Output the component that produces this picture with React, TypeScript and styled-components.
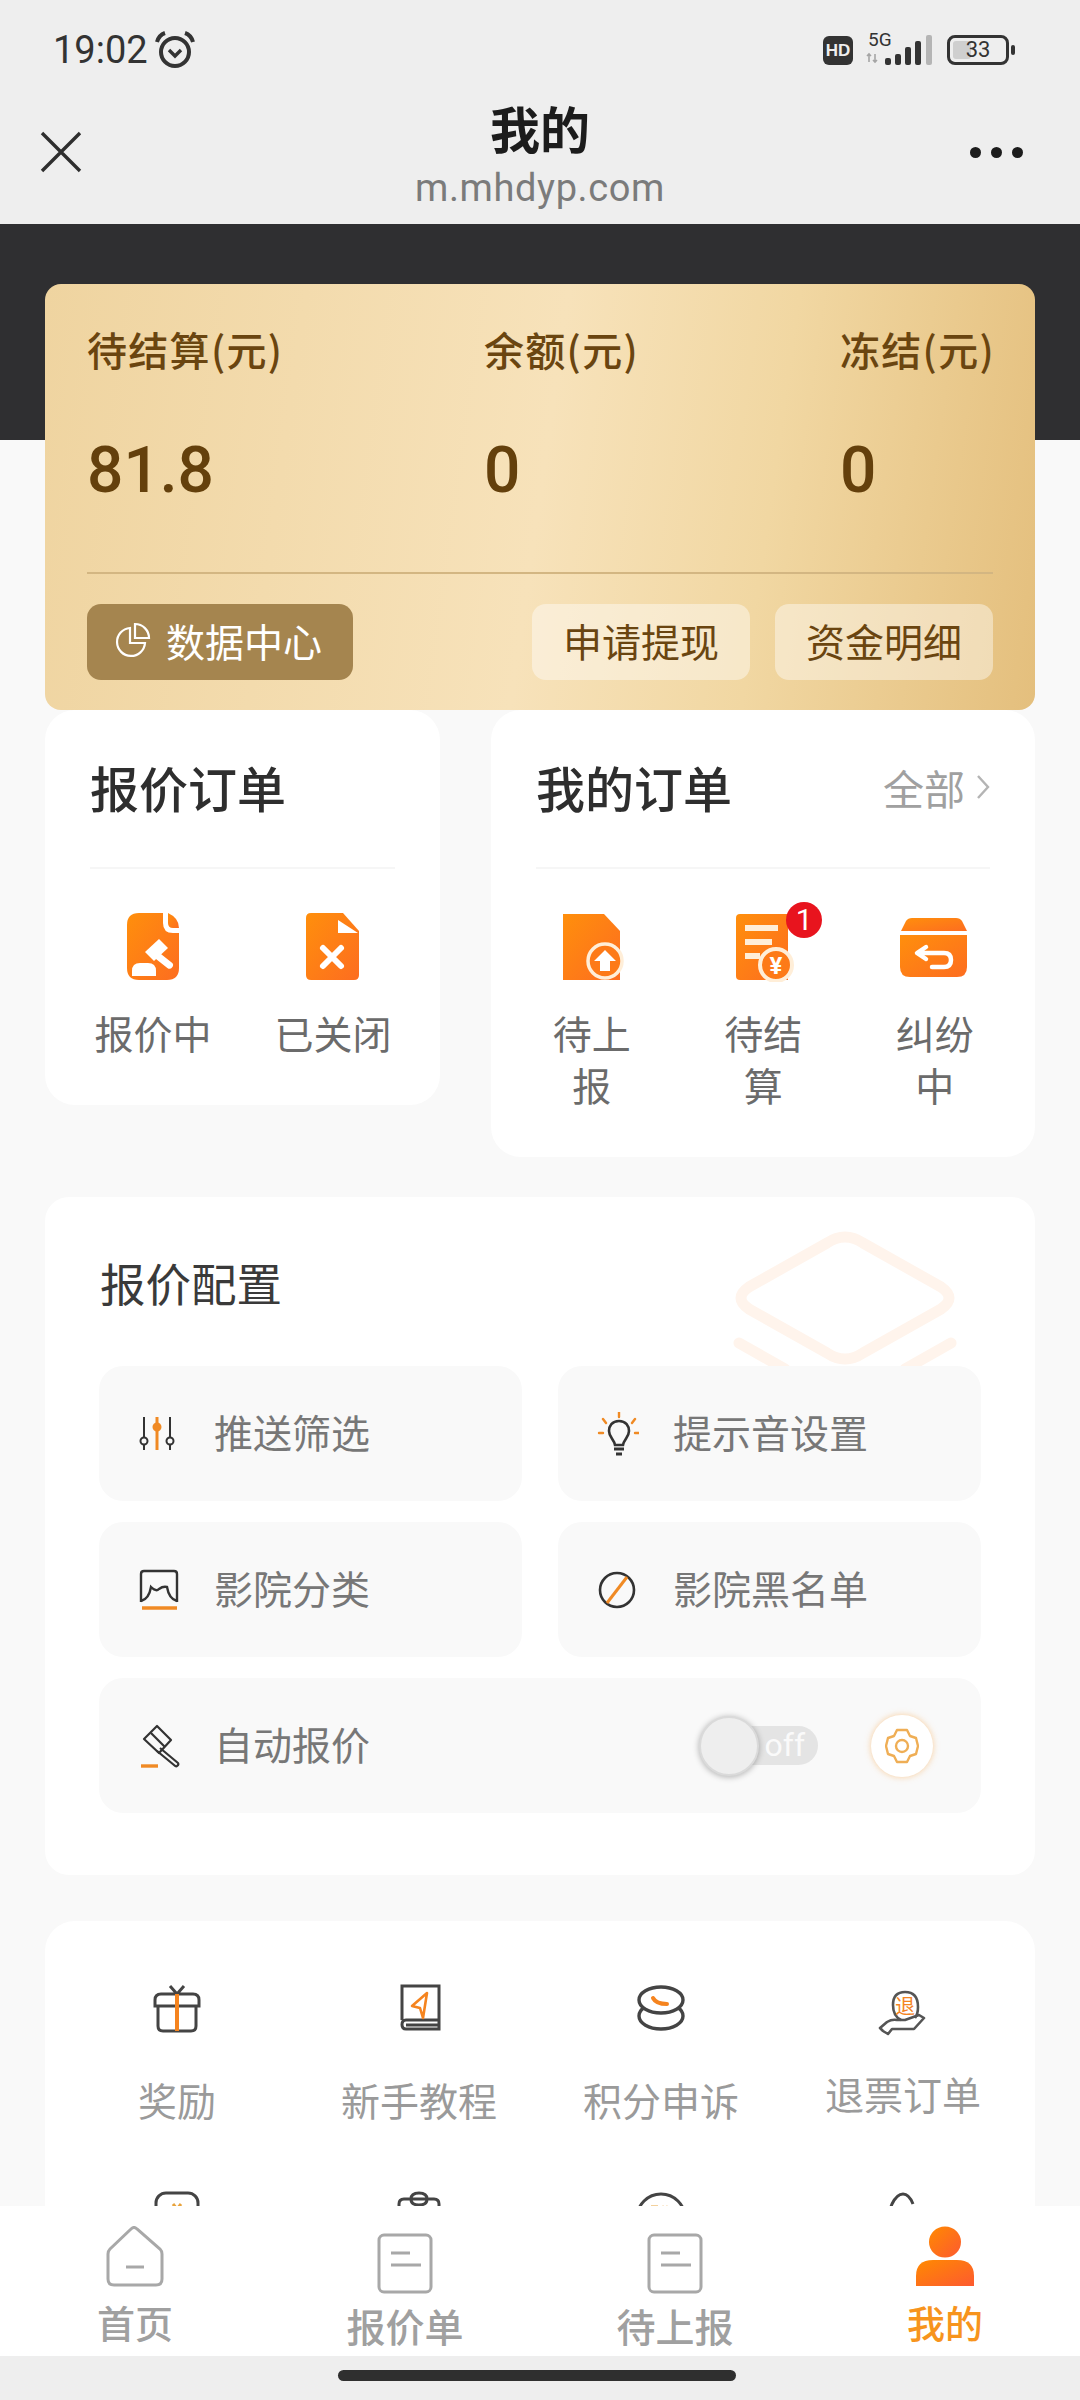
import styled, { createGlobalStyle } from "styled-components";

const GlobalStyle = createGlobalStyle`
    html, body {
        margin: 0;
        padding: 0;
        background: #f9f9f9;
        font-family: "Noto Sans CJK SC", "Noto Sans", sans-serif;
    }
    * {
        box-sizing: border-box;
    }
`;

const Page = styled.div`
    width: 1080px;
    height: 2400px;
    overflow: hidden;
    display: flex;
    flex-direction: column;
    background: #f9f9f9;
`;

/* top: status bar + browser nav */
const Header = styled.header`
    height: 224px;
    flex: none;
    background: #eeeeee;
`;
const StatusBar = styled.div`
    height: 100px;
    padding: 0 71px 0 53px;
    display: flex;
    align-items: center;
    justify-content: space-between;
`;
const StatusLeft = styled.div`
    display: flex;
    align-items: center;
    gap: 7px;
`;
const Clock = styled.span`
    font-family: Roboto, sans-serif;
    font-size: 38px;
    color: #333;
    line-height: 40px;
`;
const StatusRight = styled.div`
    display: flex;
    align-items: center;
`;
const HdBadge = styled.span`
    width: 30px;
    height: 29px;
    border-radius: 6px;
    background: #333;
    color: #eee;
    font-family: "Liberation Sans", sans-serif;
    font-size: 17px;
    font-weight: 700;
    line-height: 29px;
    text-align: center;
    margin-right: 13px;
`;
const Signal = styled.div`
    position: relative;
    width: 68px;
    height: 34px;
    margin-right: 13px;
`;
const FiveG = styled.span`
    position: absolute;
    left: 2px;
    top: -2px;
    font-family: Roboto, sans-serif;
    font-size: 19px;
    line-height: 18px;
    color: #333;
`;
const BatteryBody = styled.div`
    position: relative;
    width: 62px;
    height: 30px;
    border: 3px solid #333;
    border-radius: 8px;
    padding: 3px;
    &::after {
        content: "";
        position: absolute;
        right: -9px;
        top: 7px;
        width: 4px;
        height: 10px;
        border-radius: 2px;
        background: #333;
    }
`;
const BatteryFill = styled.div`
    width: 18px;
    height: 100%;
    background: #cfcfcf;
    border-radius: 3px;
`;
const BatteryText = styled.span`
    position: absolute;
    left: 0;
    right: 0;
    top: 0;
    font-family: Roboto, sans-serif;
    font-size: 22px;
    line-height: 24px;
    text-align: center;
    color: #333;
`;
const Nav = styled.div`
    display: grid;
    grid-template-columns: 120px 1fr 120px;
    align-items: center;
`;
const NavClose = styled.div`
    padding: 0 0 6px 40px;
    display: flex;
`;
const NavTitle = styled.div`
    text-align: center;
`;
const TitleText = styled.div`
    font-size: 50px;
    font-weight: 700;
    line-height: 54px;
    color: #1c1c1c;
`;
const UrlText = styled.div`
    font-family: Roboto, sans-serif;
    font-size: 38px;
    line-height: 44px;
    margin-top: 12px;
    color: #7b7b7b;
    letter-spacing: 0.6px;
`;
const NavDots = styled.div`
    display: flex;
    justify-content: flex-end;
    gap: 10px;
    padding: 0 57px 6px 0;
`;
const Dot = styled.span`
    width: 11px;
    height: 11px;
    border-radius: 50%;
    background: #1c1c1c;
`;

/* scrolling content */
const Content = styled.main`
    flex: 1;
    min-height: 0;
    overflow: hidden;
`;
const Hero = styled.section`
    padding: 60px 45px 0;
    background: linear-gradient(#2f2f31 216px, transparent 216px);
`;
const GoldCard = styled.div`
    height: 426px;
    padding: 41px 42px 0;
    border-radius: 16px;
    background: linear-gradient(98deg, #efd4a0 0%, #f7e2ba 50%, #f1d7a2 72%, #e4bf7d 100%);
`;
const Stats = styled.div`
    display: grid;
    grid-template-columns: 397px 356px auto;
`;
const StatLabel = styled.div`
    font-size: 40px;
    font-weight: 500;
    letter-spacing: 1.3px;
    line-height: 48px;
    color: #6a4510;
    white-space: nowrap;
`;
const StatValue = styled.div`
    margin-top: 58px;
    font-family: Roboto, sans-serif;
    font-size: 64px;
    font-weight: 500;
    line-height: 80px;
    color: #64400c;
`;
const GoldDivider = styled.div`
    height: 2px;
    margin-top: 61px;
    background: #d3b682;
`;
const GoldActions = styled.div`
    display: flex;
    align-items: center;
    margin-top: 30px;
    gap: 25px;
`;
const DataButton = styled.div`
    width: 266px;
    height: 76px;
    margin-right: auto;
    padding: 0 0 5px 28px;
    display: flex;
    align-items: center;
    gap: 15px;
    border-radius: 14px;
    background: #a5854f;
    color: #fff;
    font-size: 39px;
`;
const GhostButton = styled.div`
    width: 218px;
    height: 76px;
    padding-bottom: 5px;
    display: flex;
    align-items: center;
    justify-content: center;
    border-radius: 14px;
    background: rgba(255, 255, 255, 0.42);
    color: #6a4510;
    font-size: 39px;
`;

const OrderRow = styled.section`
    display: flex;
    align-items: flex-start;
    gap: 51px;
    padding: 0 45px;
`;
const OrderCard = styled.div<{ $width: number }>`
    width: ${(p) => p.$width}px;
    padding: 47px 45px 47px;
    border-radius: 30px;
    background: #fff;
`;
const OrderHead = styled.div`
    display: flex;
    align-items: center;
    justify-content: space-between;
    padding-bottom: 50px;
    border-bottom: 2px solid #f6f6f6;
`;
const OrderTitle = styled.h3`
    margin: 0;
    font-size: 49px;
    font-weight: 500;
    line-height: 60px;
    color: #2e2e2e;
`;
const AllLink = styled.div`
    display: flex;
    align-items: center;
    gap: 11px;
    font-size: 41px;
    line-height: 48px;
    color: #a0a0a0;
`;
const OrderGrid = styled.div<{ $cols: number; $cell: number; $bleed: number }>`
    display: grid;
    grid-template-columns: repeat(${(p) => p.$cols}, ${(p) => p.$cell}px);
    margin: 43px -${(p) => p.$bleed}px 0;
`;
const OrderItem = styled.div`
    display: flex;
    flex-direction: column;
    align-items: center;
`;
const OrderIcon = styled.div`
    position: relative;
    width: 70px;
    height: 70px;
`;
const RedBadge = styled.span`
    position: absolute;
    left: 58px;
    top: -10px;
    width: 36px;
    height: 36px;
    border-radius: 50%;
    background: #e8141e;
    color: #fff;
    font-family: Roboto, sans-serif;
    font-size: 30px;
    line-height: 36px;
    text-align: center;
`;
const OrderLabel = styled.div<{ $narrow?: boolean }>`
    margin-top: 24px;
    width: ${(p) => (p.$narrow ? "80px" : "auto")};
    font-size: 39px;
    line-height: 52px;
    text-align: center;
    color: #6b6b6b;
`;

const ConfigCard = styled.section`
    position: relative;
    margin: 40px 45px 0;
    padding: 55px 54px 62px;
    border-radius: 24px;
    background: #fff;
`;
const ConfigTitle = styled.h3`
    margin: 0 0 54px;
    padding-left: 1px;
    font-size: 45.5px;
    font-weight: 400;
    line-height: 60px;
    color: #3a3a3a;
`;
const Watermark = styled.svg`
    position: absolute;
    right: 72px;
    top: 30px;
`;
const ConfigGrid = styled.div`
    position: relative;
    display: grid;
    grid-template-columns: 423px 423px;
    gap: 21px 36px;
`;
const ConfigRow = styled.div<{ $wide?: boolean }>`
    grid-column: ${(p) => (p.$wide ? "1 / -1" : "auto")};
    height: 135px;
    padding: 0 48px 0 37px;
    display: flex;
    align-items: center;
    gap: 34px;
    border-radius: 24px;
    background: #f9f9f9;
`;
const ConfigLabel = styled.span`
    padding-bottom: 5px;
    font-size: 39px;
    color: #777;
`;
const Toggle = styled.div`
    position: relative;
    width: 119px;
    height: 60px;
    margin-left: auto;
    margin-right: 19px;
`;
const ToggleTrack = styled.div`
    position: absolute;
    left: 21px;
    right: 0;
    top: 10px;
    height: 39px;
    padding-right: 13px;
    border-radius: 20px;
    background: #e4e4e4;
    color: #fafafa;
    font-family: Roboto, sans-serif;
    font-size: 32px;
    line-height: 38px;
    text-align: right;
`;
const ToggleKnob = styled.div`
    position: absolute;
    left: 0;
    top: 0;
    width: 60px;
    height: 60px;
    border-radius: 50%;
    background: #eeeeee;
    border: 2px solid #dadada;
    box-shadow: 0 1px 6px rgba(0, 0, 0, 0.3);
`;
const GearButton = styled.div`
    width: 62px;
    height: 62px;
    display: flex;
    align-items: center;
    justify-content: center;
    border-radius: 50%;
    background: #fff;
    box-shadow: 0 0 6px rgba(247, 170, 80, 0.55);
`;

const ToolsCard = styled.section`
    margin: 46px 45px 0;
    padding: 60px 11px 0;
    display: grid;
    grid-template-columns: repeat(4, 242px);
    row-gap: 63px;
    border-radius: 30px;
    background: #fff;
`;
const ToolItem = styled.div`
    display: flex;
    flex-direction: column;
    align-items: center;
`;
const ToolLabel = styled.div<{ $lift?: boolean }>`
    margin-top: ${(p) => (p.$lift ? "26px" : "32px")};
    font-size: 39px;
    line-height: 52px;
    color: #9a9a9a;
`;

/* bottom tabs */
const TabBar = styled.nav`
    height: 150px;
    flex: none;
    padding-top: 20px;
    display: grid;
    grid-template-columns: repeat(4, 270px);
    background: #fff;
    position: relative;
`;
const Tab = styled.div`
    display: flex;
    flex-direction: column;
    align-items: center;
`;
const TabLabel = styled.div<{ $active?: boolean; $low?: boolean }>`
    margin-top: ${(p) => (p.$low ? "8px" : "5px")};
    font-size: ${(p) => (p.$low ? "39px" : "38px")};
    font-weight: 500;
    line-height: 46px;
    color: ${(p) => (p.$active ? "#f7941d" : "#a0a0a0")};
`;
const HomeBar = styled.div`
    height: 44px;
    flex: none;
    padding-top: 14px;
    background: #eeeeee;
`;
const HomePill = styled.div`
    width: 398px;
    height: 11px;
    margin-left: 338px;
    border-radius: 6px;
    background: #2f2f2f;
`;

const Grad = ({ id, from = "#ff8f0c", to = "#fd6d20" }: { id: string; from?: string; to?: string }) => (
    <defs>
        <linearGradient id={id} x1="0" y1="0" x2="1" y2="1">
            <stop offset="0" stopColor={from} />
            <stop offset="1" stopColor={to} />
        </linearGradient>
    </defs>
);

const AlarmIcon = () => (
    <svg width="40" height="38" viewBox="0 0 40 38" fill="none" stroke="#333">
        <circle cx="20" cy="21" r="14" strokeWidth="4" />
        <path d="M14 19l6 6 6-6" strokeWidth="3.4" />
        <path d="M2 11q2-7 8-9M38 11q-2-7-8-9" strokeWidth="4" />
    </svg>
);
const SignalBars = () => (
    <svg width="68" height="34" viewBox="0 0 68 34">
        <path d="M3 29v-8M1 23l2-2 2 2M9 21v8M7 27l2 2 2-2" stroke="#a5a5a5" strokeWidth="1.6" fill="none" />
        <rect x="19" y="25" width="6" height="7" rx="2" fill="#333" />
        <rect x="29" y="21" width="6" height="11" rx="2" fill="#333" />
        <rect x="39" y="14" width="6" height="18" rx="2" fill="#333" />
        <rect x="49" y="8" width="6" height="24" rx="2" fill="#333" />
        <rect x="60" y="2" width="6" height="30" rx="2" fill="#b5b5b5" />
    </svg>
);
const CloseIcon = () => (
    <svg width="42" height="42" viewBox="0 0 42 42" stroke="#2e2e2e" strokeWidth="3.4">
        <path d="M2 2l38 38M40 2L2 40" />
    </svg>
);
const PieIcon = () => (
    <svg width="36" height="36" viewBox="0 0 36 36" fill="none" stroke="#fff" strokeWidth="2.2">
        <path d="M15 6a14 14 0 1 0 15 15H15z" />
        <path d="M20 2a14 14 0 0 1 14 14H20z" />
    </svg>
);
const ChevronIcon = () => (
    <svg width="14" height="26" viewBox="0 0 14 26" fill="none" stroke="#b4b4b4" strokeWidth="2.4">
        <path d="M2 2l10 11L2 24" />
    </svg>
);

const QuotingIcon = () => (
    <svg width="70" height="70" viewBox="0 0 70 70">
        <Grad id="quoting" />
        <path d="M21 1h24v10q0 10 10 10h6v35q0 12-12 12H21Q9 68 9 56V13Q9 1 21 1z" fill="url(#quoting)" />
        <path d="M50 1q11 5 11 15h-6q-5 0-5-5z" fill="url(#quoting)" />
        <g fill="#fff">
            <path d="M27 40l14-13 9 9-14 13z" />
            <rect x="38" y="39" width="21" height="7" rx="3.5" transform="rotate(38 38 42)" />
            <path d="M14 64v-5q0-8 8-8h8q8 0 8 8v5z" />
        </g>
    </svg>
);
const ClosedIcon = () => (
    <svg width="70" height="70" viewBox="0 0 70 70">
        <Grad id="closed" />
        <path d="M13 1h32l16 18v44q0 5-5 5H13q-5 0-5-5V6q0-5 5-5z" fill="url(#closed)" />
        <path d="M40 8l20 13H40z" fill="#fff" />
        <path d="M25 36l18 18M43 36L25 54" stroke="#fff" strokeWidth="6" strokeLinecap="round" />
    </svg>
);
const UploadDocIcon = () => (
    <svg width="70" height="70" viewBox="0 0 70 70">
        <Grad id="upload" />
        <path d="M6 2h41l16 17v49H6z" fill="url(#upload)" />
        <circle cx="48" cy="49" r="17" fill="#fd7a18" stroke="#ffeed8" strokeWidth="3.5" />
        <path d="M48 38l11 11h-6v10H43V49h-6z" fill="#fff" />
    </svg>
);
const SettleDocIcon = () => (
    <svg width="70" height="70" viewBox="0 0 70 70">
        <Grad id="settle" />
        <path d="M12 2h48v66H12q-4 0-4-4V6q0-4 4-4z" fill="url(#settle)" />
        <g fill="#ffeed8">
            <rect x="17" y="13" width="33" height="6" />
            <rect x="17" y="27" width="27" height="6" />
            <rect x="17" y="41" width="15" height="6" />
        </g>
        <circle cx="48" cy="53" r="16" fill="#fd7a18" stroke="#ffeed8" strokeWidth="4" />
        <text x="48" y="62" fontFamily="Roboto, sans-serif" fontSize="24" fontWeight="700" fill="#fff" textAnchor="middle">
            ¥
        </text>
    </svg>
);
const DisputeIcon = () => (
    <svg width="70" height="70" viewBox="0 0 70 70">
        <Grad id="dispute" />
        <path d="M12 6h44q4 0 6 3l5 10H1l5-10q2-3 6-3z" fill="url(#dispute)" />
        <path d="M0 23h67v32q0 10-10 10H10Q0 65 0 55z" fill="url(#dispute)" />
        <path
            d="M26 35l-9 6 9 6M18 41h26q7 0 7 7t-7 7H32"
            fill="none"
            stroke="#fff"
            strokeWidth="4.5"
            strokeLinecap="round"
            strokeLinejoin="round"
        />
    </svg>
);

const DARK = "#333";
const ORANGE = "#f08a24";

const SlidersIcon = () => (
    <svg width="44" height="44" viewBox="0 0 44 44" fill="none" strokeWidth="2">
        <path d="M8 5v33M34 5v33" stroke={DARK} />
        <circle cx="8" cy="29" r="3.5" fill="#f9f9f9" stroke={DARK} />
        <circle cx="34" cy="29" r="3.5" fill="#f9f9f9" stroke={DARK} />
        <path d="M21 5v33" stroke={ORANGE} strokeWidth="3" />
        <circle cx="21" cy="15" r="3.5" fill={ORANGE} stroke={ORANGE} />
    </svg>
);
const BulbIcon = () => (
    <svg width="44" height="44" viewBox="-2 0 44 44" fill="none" strokeWidth="2.4">
        <path d="M22 0v5M6 7l3 4M38 7l-3 4M2 21h4M38 21h4" stroke={ORANGE} strokeLinecap="round" />
        <path d="M22 9c-7 0-10 5-10 10 0 6 5 8 6 14h8c1-6 6-8 6-14 0-5-3-10-10-10z" stroke={DARK} strokeWidth="2.6" />
        <path d="M17 37h10M19 42h6" stroke={DARK} strokeWidth="3" />
    </svg>
);
const PictureIcon = () => (
    <svg width="44" height="44" viewBox="0 0 44 44" fill="none" strokeWidth="2.4">
        <path d="M5 34V6q0-3 3-3h30q3 0 3 3v28" stroke={DARK} />
        <path d="M5 33q8-2 10-14 5 5 8 2 4-3 8-2 2 12 10 14" stroke={DARK} />
        <path d="M6 40h35" stroke={ORANGE} strokeWidth="3.6" />
    </svg>
);
const BlockIcon = () => (
    <svg width="44" height="44" viewBox="0 0 44 44" fill="none">
        <circle cx="22" cy="22" r="17" stroke={DARK} strokeWidth="2.6" />
        <path d="M12 35l20-26" stroke={ORANGE} strokeWidth="3" />
    </svg>
);
const GavelIcon = () => (
    <svg width="44" height="44" viewBox="0 0 44 44" fill="none" stroke={DARK} strokeWidth="2.2" strokeLinejoin="round">
        <path d="M21 2l14 14-12 13L8 15z" />
        <path d="M15 9l14 14" />
        <path d="M24 24l18 15q1 2-1 3-1 1-3-1L21 27" />
        <path d="M5 42h17" stroke={ORANGE} strokeWidth="3.4" />
    </svg>
);
const GearIcon = () => (
    <svg width="34" height="38" viewBox="0 0 34 38" fill="none" stroke="#efae55" strokeWidth="2.4" strokeLinejoin="round">
        <path d="M12 3h10l3 6 6 2 2 8-2 8-6 2-3 6H12l-3-6-6-2-2-8 2-8 6-2z" />
        <circle cx="17" cy="19" r="6" />
    </svg>
);

const GiftIcon = () => (
    <svg width="60" height="60" viewBox="0 0 60 60" fill="none" stroke="#444" strokeWidth="3">
        <path d="M23 5l7 8 7-8M8 25v-6q0-6 6-6h32q6 0 6 6v6z" />
        <path d="M11 25v20q0 5 5 5h28q5 0 5-5V25" />
        <path d="M30 13v37" stroke="#f5841f" strokeWidth="4" />
    </svg>
);
const BookIcon = () => (
    <svg width="60" height="60" viewBox="0 0 60 60" fill="none" stroke="#444" strokeWidth="3">
        <path d="M13 39V5h37v43H17q-4 0-4-4.500t4-4.500h33M17 44h33" />
        <path d="M38 12L23 25l8 2 3 10z" stroke="#f5841f" strokeWidth="2.6" strokeLinejoin="round" />
    </svg>
);
const CoinsIcon = () => (
    <svg width="60" height="60" viewBox="0 0 60 60" fill="none" stroke="#444" strokeWidth="3.4">
        <ellipse cx="30" cy="35" rx="22" ry="13" />
        <ellipse cx="30" cy="19" rx="22" ry="13" fill="#fff" />
        <path d="M22 17q3 6 14 6" stroke="#f5841f" strokeWidth="4" strokeLinecap="round" />
    </svg>
);
const RefundIcon = () => (
    <svg width="60" height="60" viewBox="0 0 60 60" fill="none" stroke="#555" strokeWidth="2.6">
        <path d="M28 39q-8-4-8-15 0-13 12-13 13 0 13 15 0 7-3 11" />
        <text x="32" y="33" fontSize="20" fill="#f5841f" stroke="none" textAnchor="middle" fontFamily="Noto Sans CJK SC, sans-serif">
            退
        </text>
        <path d="M7 47l7-6q5-3 10-2h8l14-5 5 3-10 11H19l-4 5-5-3-3-3z" strokeLinejoin="round" />
    </svg>
);
const PartialIcon = ({ kind }: { kind: number }) => (
    <svg width="60" height="60" viewBox="0 0 60 60" fill="none" stroke="#444" strokeWidth="3">
        {kind === 0 && <rect x="9" y="5" width="42" height="50" rx="10" />}
        {kind === 0 && <path d="M26 16l4 5 4-5" stroke="#e8a33c" />}
        {kind === 1 && <path d="M10 55V16q0-5 5-5h30q5 0 5 5v39M22 11q0-6 8-6t8 6-8 6-8-6z" />}
        {kind === 2 && <circle cx="30" cy="30" r="24" />}
        {kind === 2 && <path d="M20 19h7M24 19v8M31 18l3 8 3-8" stroke="#e8a33c" />}
        {kind === 3 && <path d="M14 50q0-22 5-34 5-10 11-10t10 10" />}
    </svg>
);

const HouseTab = () => (
    <svg width="60" height="68" viewBox="0 0 60 68" fill="none" stroke="#a8a8a8" strokeWidth="3">
        <path d="M26 3q3-3 6 0l23 20q2 2 2 5v25q0 6-6 6H9q-6 0-6-6V28q0-3 2-5z" />
        <path d="M21 41h18" />
    </svg>
);
const DocTab = () => (
    <svg width="60" height="68" viewBox="0 0 60 68" fill="none" stroke="#a8a8a8" strokeWidth="3">
        <rect x="4" y="9" width="52" height="57" rx="5" />
        <path d="M16 27h19M16 39h30" />
    </svg>
);
const MeTab = () => (
    <svg width="60" height="68" viewBox="0 0 60 68">
        <Grad id="meTab" from="#ff8a00" to="#fd5a30" />
        <ellipse cx="30" cy="16" rx="16" ry="15.5" fill="url(#meTab)" />
        <path d="M1 60V50q0-16 17-16h24q17 0 17 16v10z" fill="url(#meTab)" />
    </svg>
);

const App = () => {
    return (
        <Page>
            <GlobalStyle />
            <Header>
                <StatusBar>
                    <StatusLeft>
                        <Clock>19:02</Clock>
                        <AlarmIcon />
                    </StatusLeft>
                    <StatusRight>
                        <HdBadge>HD</HdBadge>
                        <Signal>
                            <FiveG>5G</FiveG>
                            <SignalBars />
                        </Signal>
                        <BatteryBody>
                            <BatteryFill />
                            <BatteryText>33</BatteryText>
                        </BatteryBody>
                    </StatusRight>
                </StatusBar>
                <Nav>
                    <NavClose>
                        <CloseIcon />
                    </NavClose>
                    <NavTitle>
                        <TitleText>我的</TitleText>
                        <UrlText>m.mhdyp.com</UrlText>
                    </NavTitle>
                    <NavDots>
                        <Dot />
                        <Dot />
                        <Dot />
                    </NavDots>
                </Nav>
            </Header>

            <Content>
                <Hero>
                    <GoldCard>
                        <Stats>
                            <div>
                                <StatLabel>待结算(元)</StatLabel>
                                <StatValue>81.8</StatValue>
                            </div>
                            <div>
                                <StatLabel>余额(元)</StatLabel>
                                <StatValue>0</StatValue>
                            </div>
                            <div>
                                <StatLabel>冻结(元)</StatLabel>
                                <StatValue>0</StatValue>
                            </div>
                        </Stats>
                        <GoldDivider />
                        <GoldActions>
                            <DataButton>
                                <PieIcon />
                                数据中心
                            </DataButton>
                            <GhostButton>申请提现</GhostButton>
                            <GhostButton>资金明细</GhostButton>
                        </GoldActions>
                    </GoldCard>
                </Hero>

                <OrderRow>
                    <OrderCard $width={395}>
                        <OrderHead>
                            <OrderTitle>报价订单</OrderTitle>
                        </OrderHead>
                        <OrderGrid $cols={2} $cell={180} $bleed={27}>
                            <OrderItem>
                                <OrderIcon>
                                    <QuotingIcon />
                                </OrderIcon>
                                <OrderLabel>报价中</OrderLabel>
                            </OrderItem>
                            <OrderItem>
                                <OrderIcon>
                                    <ClosedIcon />
                                </OrderIcon>
                                <OrderLabel>已关闭</OrderLabel>
                            </OrderItem>
                        </OrderGrid>
                    </OrderCard>
                    <OrderCard $width={544}>
                        <OrderHead>
                            <OrderTitle>我的订单</OrderTitle>
                            <AllLink>
                                全部
                                <ChevronIcon />
                            </AllLink>
                        </OrderHead>
                        <OrderGrid $cols={3} $cell={171.5} $bleed={30}>
                            <OrderItem>
                                <OrderIcon>
                                    <UploadDocIcon />
                                </OrderIcon>
                                <OrderLabel $narrow>待上报</OrderLabel>
                            </OrderItem>
                            <OrderItem>
                                <OrderIcon>
                                    <SettleDocIcon />
                                    <RedBadge>1</RedBadge>
                                </OrderIcon>
                                <OrderLabel $narrow>待结算</OrderLabel>
                            </OrderItem>
                            <OrderItem>
                                <OrderIcon>
                                    <DisputeIcon />
                                </OrderIcon>
                                <OrderLabel $narrow>纠纷中</OrderLabel>
                            </OrderItem>
                        </OrderGrid>
                    </OrderCard>
                </OrderRow>

                <ConfigCard>
                    <Watermark width="236" height="140" viewBox="0 0 236 140" fill="none" stroke="#fff4ec" strokeWidth="11">
                        <path d="M100 16q18-12 36 0l78 44q16 11 0 22l-78 44q-18 12-36 0L22 82Q6 71 22 60z" />
                        <path d="M12 116l46 26M224 116l-46 26" strokeLinecap="round" />
                    </Watermark>
                    <ConfigTitle>报价配置</ConfigTitle>
                    <ConfigGrid>
                        <ConfigRow>
                            <SlidersIcon />
                            <ConfigLabel>推送筛选</ConfigLabel>
                        </ConfigRow>
                        <ConfigRow>
                            <BulbIcon />
                            <ConfigLabel>提示音设置</ConfigLabel>
                        </ConfigRow>
                        <ConfigRow>
                            <PictureIcon />
                            <ConfigLabel>影院分类</ConfigLabel>
                        </ConfigRow>
                        <ConfigRow>
                            <BlockIcon />
                            <ConfigLabel>影院黑名单</ConfigLabel>
                        </ConfigRow>
                        <ConfigRow $wide>
                            <GavelIcon />
                            <ConfigLabel>自动报价</ConfigLabel>
                            <Toggle>
                                <ToggleTrack>off</ToggleTrack>
                                <ToggleKnob />
                            </Toggle>
                            <GearButton>
                                <GearIcon />
                            </GearButton>
                        </ConfigRow>
                    </ConfigGrid>
                </ConfigCard>

                <ToolsCard>
                    <ToolItem>
                        <GiftIcon />
                        <ToolLabel>奖励</ToolLabel>
                    </ToolItem>
                    <ToolItem>
                        <BookIcon />
                        <ToolLabel>新手教程</ToolLabel>
                    </ToolItem>
                    <ToolItem>
                        <CoinsIcon />
                        <ToolLabel>积分申诉</ToolLabel>
                    </ToolItem>
                    <ToolItem>
                        <RefundIcon />
                        <ToolLabel $lift>退票订单</ToolLabel>
                    </ToolItem>
                    {[0, 1, 2, 3].map((kind) => (
                        <ToolItem key={kind}>
                            <PartialIcon kind={kind} />
                        </ToolItem>
                    ))}
                </ToolsCard>
            </Content>

            <TabBar>
                <Tab>
                    <HouseTab />
                    <TabLabel>首页</TabLabel>
                </Tab>
                <Tab>
                    <DocTab />
                    <TabLabel $low>报价单</TabLabel>
                </Tab>
                <Tab>
                    <DocTab />
                    <TabLabel $low>待上报</TabLabel>
                </Tab>
                <Tab>
                    <MeTab />
                    <TabLabel $active>我的</TabLabel>
                </Tab>
            </TabBar>
            <HomeBar>
                <HomePill />
            </HomeBar>
        </Page>
    );
};

export default App;
